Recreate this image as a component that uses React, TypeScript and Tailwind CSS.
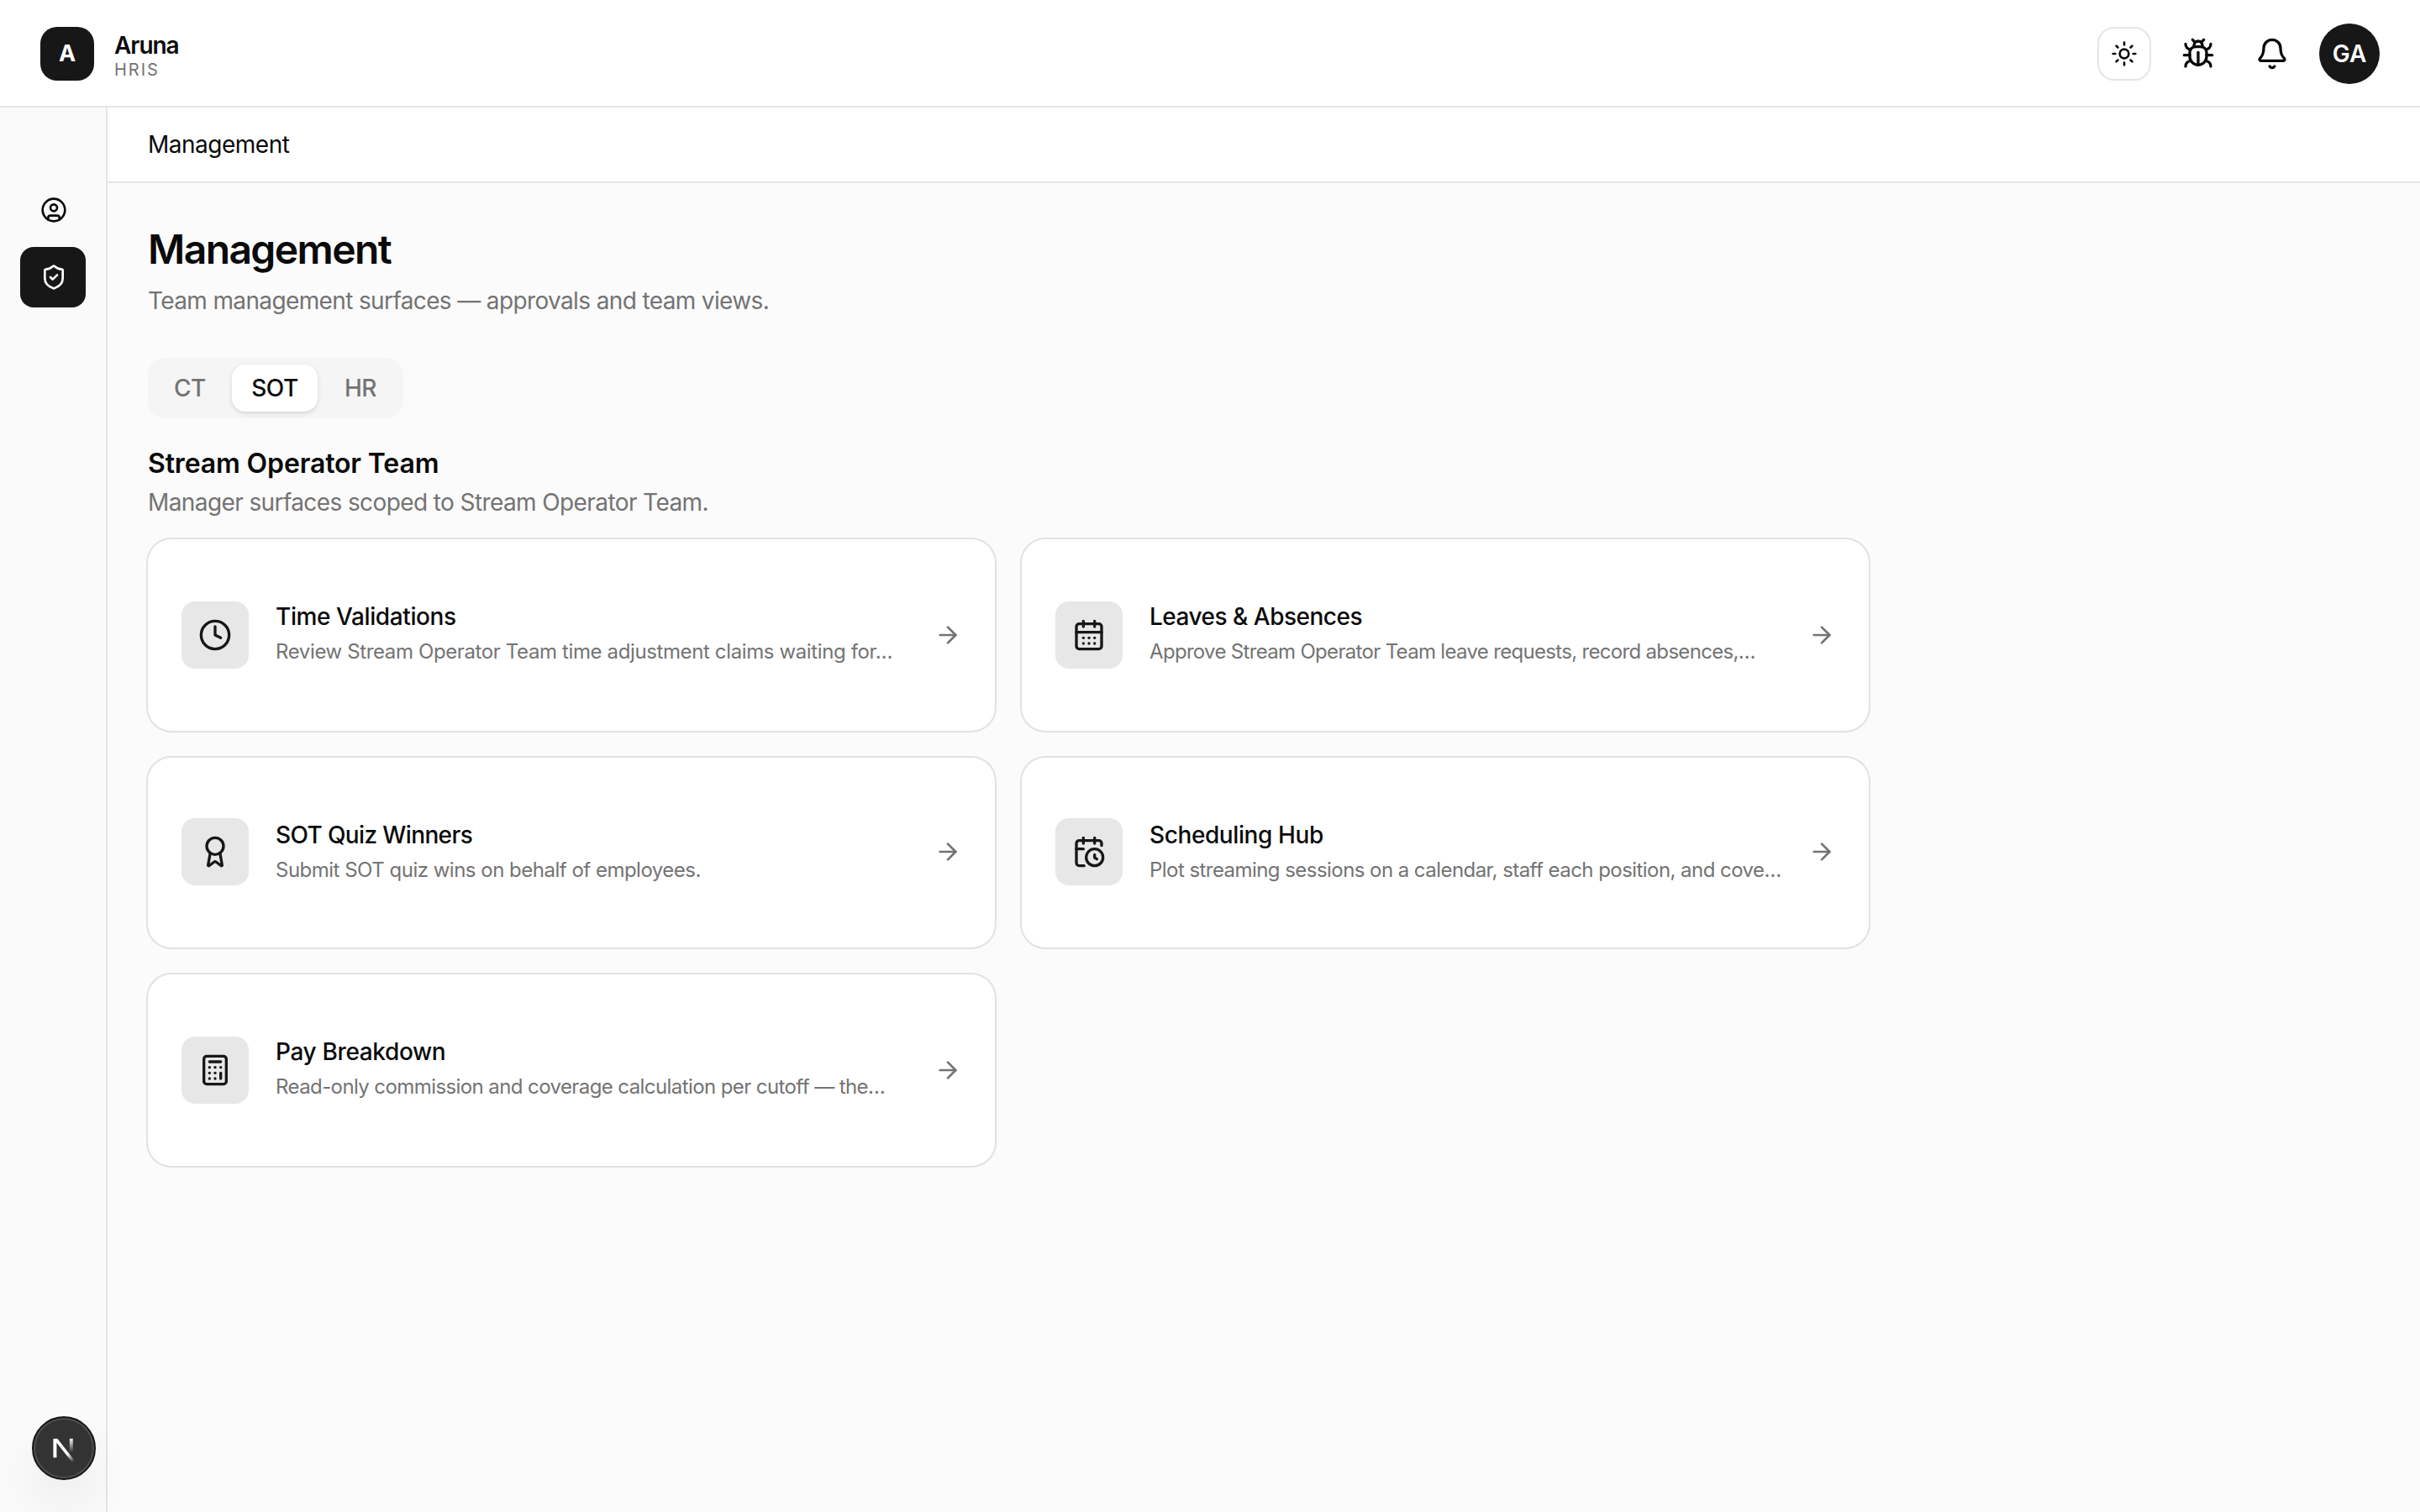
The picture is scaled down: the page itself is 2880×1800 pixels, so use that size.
import { ArrowRight, Award, Bell, Bug, Calculator, CalendarClock, CalendarDays, CircleUser, Clock, ShieldCheck, Sun } from 'lucide-react'
import type { LucideIcon } from 'lucide-react'
import clsx from 'clsx'

type Surface = {
  title: string
  description: string
  icon: LucideIcon
  titleTracking: string
  tracking: string
  compact?: boolean
}

const surfaces: Surface[] = [
  { title: 'Time Validations', description: 'Review Stream Operator Team time adjustment claims waiting for…', icon: Clock, titleTracking: 'tracking-[-0.4px]', tracking: 'tracking-[-0.38px]' },
  { title: 'Leaves & Absences', description: 'Approve Stream Operator Team leave requests, record absences,…', icon: CalendarDays, titleTracking: 'tracking-[-0.5px]', tracking: 'tracking-[-0.68px]' },
  { title: 'SOT Quiz Winners', description: 'Submit SOT quiz wins on behalf of employees.', icon: Award, titleTracking: 'tracking-[-0.63px]', tracking: 'tracking-[-0.5px]', compact: true },
  { title: 'Scheduling Hub', description: 'Plot streaming sessions on a calendar, staff each position, and cove…', icon: CalendarClock, titleTracking: 'tracking-[-0.4px]', tracking: 'tracking-[-0.55px]', compact: true },
  { title: 'Pay Breakdown', description: 'Read-only commission and coverage calculation per cutoff — the…', icon: Calculator, titleTracking: 'tracking-[-0.36px]', tracking: 'tracking-[-0.59px]' },
]

function Header() {
  return (
    <header className="flex h-32 shrink-0 items-center justify-between border-b-2 border-neutral-200 bg-white px-12 pt-0.5">
      <div className="flex items-center gap-6">
        <div className="flex size-16 items-center justify-center rounded-[20px] bg-neutral-900 text-[27px] font-bold text-white">A</div>
        <div className="flex flex-col pt-0.5">
          <span className="text-[28px] leading-[35px] font-semibold tracking-[-1.05px]">Aruna</span>
          <span className="text-[20px] leading-[22px] tracking-[2px] text-neutral-500">HRIS</span>
        </div>
      </div>
      <div className="flex items-center">
        <button className="flex size-16 items-center justify-center rounded-[20px] border-2 border-neutral-200" aria-label="Toggle theme">
          <Sun className="size-8" />
        </button>
        <button className="ml-5 flex size-[72px] items-center justify-center" aria-label="Report a bug">
          <Bug className="size-10" />
        </button>
        <button className="ml-4 flex size-[72px] items-center justify-center" aria-label="Notifications">
          <Bell className="size-10" />
        </button>
        <div className="ml-5 flex size-[72px] items-center justify-center rounded-full bg-neutral-900 text-[28px] font-semibold text-white">GA</div>
      </div>
    </header>
  )
}

function DevBadge() {
  return (
    <div className="fixed bottom-[38px] left-[38px] flex size-[76px] items-center justify-center rounded-full border-2 border-neutral-900 bg-[#333] shadow-[inset_0_0_0_2px_#505050,0_32px_64px_-16px_rgba(0,0,0,0.16)]">
      <svg viewBox="0 0 76 76" className="size-[76px] shrink-0" fill="none">
        <defs>
          <linearGradient id="diag" x1="38" y1="38" x2="50" y2="54" gradientUnits="userSpaceOnUse">
            <stop offset="0.4" stopColor="#fff" />
            <stop offset="1" stopColor="#fff" stopOpacity="0" />
          </linearGradient>
          <linearGradient id="stem" x1="47" y1="26" x2="47" y2="43" gradientUnits="userSpaceOnUse">
            <stop stopColor="#fff" />
            <stop offset="1" stopColor="#fff" stopOpacity="0" />
          </linearGradient>
        </defs>
        <path d="M25.4 49.2V26.7H30.4L50.6 52.4L47.6 54.4L29.4 31.4V49.2Z" fill="url(#diag)" />
        <path d="M46.8 26.7V43" stroke="url(#stem)" strokeWidth="4" />
      </svg>
    </div>
  )
}

function Sidebar() {
  return (
    <aside className="flex w-32 shrink-0 flex-col gap-2 border-r-2 border-neutral-200 bg-neutral-50 pt-[86px] pl-6">
      <a className="flex h-[72px] w-[78px] items-center pl-6">
        <CircleUser className="size-8 shrink-0" />
      </a>
      <a className="flex h-[72px] w-[78px] items-center rounded-2xl bg-neutral-900 pl-6 text-white">
        <ShieldCheck className="size-8 shrink-0" />
      </a>
    </aside>
  )
}

function SurfaceCard({ title, description, icon: Icon, titleTracking, tracking, compact }: Surface) {
  return (
    <a className={clsx('flex items-center rounded-[28px] bg-white px-10 ring-2 ring-neutral-950/10', compact ? 'h-[226px]' : 'h-[228px]')}>
      <span className={clsx('flex size-20 shrink-0 items-center justify-center rounded-2xl bg-[#e7e7e7] text-neutral-900', compact && 'mb-0.5')}>
        <Icon className="size-10" />
      </span>
      <span className={clsx('mx-8 flex min-w-0 flex-1 flex-col gap-1 pb-0.5 whitespace-nowrap', compact && 'mt-0.5')}>
        <span className={clsx('text-[28px] leading-[38px] font-medium', titleTracking)}>{title}</span>
        <span className={clsx('text-[24px] leading-[38px] text-neutral-500', tracking)}>{description}</span>
      </span>
      <ArrowRight className={clsx('size-8 shrink-0 text-neutral-500', compact && 'mb-0.5')} />
    </a>
  )
}

export default function App() {
  return (
    <div className="flex h-[1800px] w-[2880px] flex-col overflow-hidden bg-[#fbfbfb] font-[Inter,sans-serif] text-neutral-950">
      <Header />
      <div className="flex flex-1">
        <Sidebar />
        <div className="flex flex-1 flex-col">
          <nav className="flex h-[90px] items-center border-b-2 border-neutral-200 bg-white pl-12 text-[28px] tracking-[-0.5px]">Management</nav>
          <main className="flex flex-col px-12 pt-12">
            <h1 className="text-[48px] leading-[62px] font-semibold tracking-[-1.6px]">Management</h1>
            <p className="mt-2.5 text-[28px] leading-[40px] tracking-[-0.63px] text-neutral-500">Team management surfaces — approvals and team views.</p>
            <div className="mt-12 flex h-[72px] w-[304px] gap-2 rounded-[20px] bg-neutral-100 p-2 text-[28px] font-medium tracking-[-0.5px] text-neutral-500">
              <button className="w-[84px]">CT</button>
              <button className="w-[102px] rounded-2xl bg-white text-neutral-950 shadow-[0_2px_6px_rgba(0,0,0,0.1),0_2px_4px_-2px_rgba(0,0,0,0.1)]">SOT</button>
              <button className="w-[86px]">HR</button>
            </div>
            <h2 className="mt-8 text-[32px] leading-[44px] font-semibold tracking-[-0.14px]">Stream Operator Team</h2>
            <p className="mt-1 text-[28px] leading-[40px] tracking-[-0.6px] text-neutral-500">Manager surfaces scoped to Stream Operator Team.</p>
            <div className="mt-6 grid w-[2048px] grid-cols-2 gap-8">
              {surfaces.map(s => (
                <SurfaceCard key={s.title} {...s} />
              ))}
            </div>
          </main>
        </div>
      </div>
      <DevBadge />
    </div>
  )
}
